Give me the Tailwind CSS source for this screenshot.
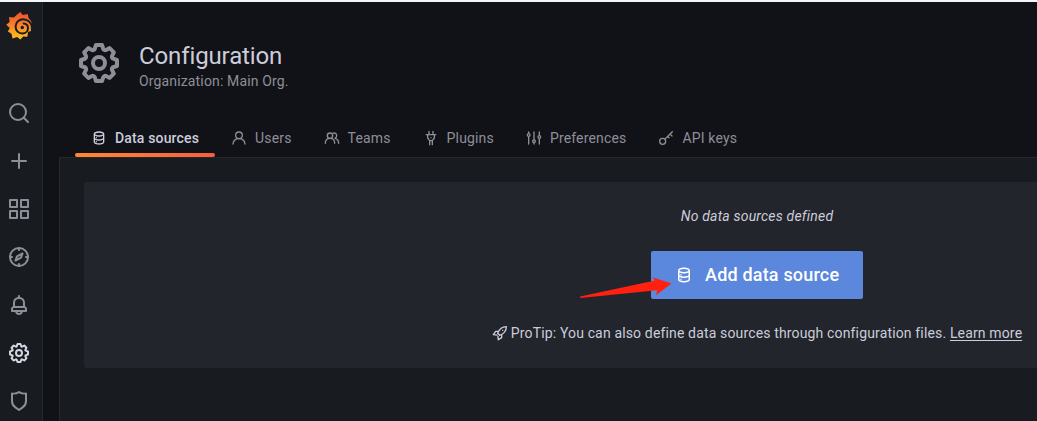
<!DOCTYPE html>
<html lang="en">
<head>
<meta charset="utf-8">
<title>Configuration: Data sources</title>
<script src="https://cdn.jsdelivr.net/npm/@tailwindcss/browser@4"></script>
</head>
<body class="h-[421px] w-[1037px] overflow-hidden bg-[#111217] font-['Roboto',sans-serif] text-sm text-[#ccccdc]">
<svg class="hidden">
  <symbol id="cog" viewBox="0 0 24 24"><path d="M21.32,9.55l-1.89-.63.89-1.78A1,1,0,0,0,20.13,6L18,3.87a1,1,0,0,0-1.15-.19l-1.78.89-.63-1.89A1,1,0,0,0,13.5,2h-3a1,1,0,0,0-.95.68L8.92,4.57,7.14,3.68A1,1,0,0,0,6,3.87L3.87,6a1,1,0,0,0-.19,1.15l.89,1.78-1.89.63A1,1,0,0,0,2,10.5v3a1,1,0,0,0,.68.95l1.89.63-.89,1.78A1,1,0,0,0,3.87,18L6,20.13a1,1,0,0,0,1.15.19l1.78-.89.63,1.89a1,1,0,0,0,.95.68h3a1,1,0,0,0,.95-.68l.63-1.89,1.78.89A1,1,0,0,0,18,20.13L20.13,18a1,1,0,0,0,.19-1.15l-.89-1.78,1.89-.63A1,1,0,0,0,22,13.5v-3A1,1,0,0,0,21.32,9.55ZM20,12.78l-1.2.4A2,2,0,0,0,17.64,16l.57,1.14-1.1,1.1L16,17.64a2,2,0,0,0-2.79,1.16l-.4,1.2H11.22l-.4-1.2A2,2,0,0,0,8,17.64l-1.14.57-1.1-1.1L6.36,16A2,2,0,0,0,5.2,13.18L4,12.78V11.22l1.2-.4A2,2,0,0,0,6.36,8L5.79,6.89l1.1-1.1L8,6.36A2,2,0,0,0,10.82,5.2l.4-1.2h1.56l.4,1.2A2,2,0,0,0,16,6.36l1.14-.57,1.1,1.1L17.64,8a2,2,0,0,0,1.16,2.79l1.2.4ZM12,8a4,4,0,1,0,4,4A4,4,0,0,0,12,8Zm0,6a2,2,0,1,1,2-2A2,2,0,0,1,12,14Z"/></symbol>
  <symbol id="database" viewBox="0 0 24 24"><path d="M8,16.5a1,1,0,1,0,1,1A1,1,0,0,0,8,16.5ZM12,2C8,2,4,3.37,4,6V18c0,2.63,4,4,8,4s8-1.37,8-4V6C20,3.37,16,2,12,2Zm6,16c0,.71-2.28,2-6,2s-6-1.29-6-2V14.73A13.16,13.16,0,0,0,12,16a13.16,13.16,0,0,0,6-1.27Zm0-6c0,.71-2.28,2-6,2s-6-1.29-6-2V8.73A13.16,13.16,0,0,0,12,10a13.16,13.16,0,0,0,6-1.27ZM12,8C8.28,8,6,6.71,6,6s2.28-2,6-2,6,1.29,6,2S15.72,8,12,8ZM8,10.5a1,1,0,1,0,1,1A1,1,0,0,0,8,10.5Z"/></symbol>
</svg>
<div class="flex h-full flex-col">
  <div class="h-[2px] shrink-0 bg-[#f5f6f8]"></div>
  <div class="flex min-h-0 flex-1">
    <nav class="flex w-[43px] shrink-0 flex-col border-r border-[#25272c] bg-[#181b1f] pt-[9px] pl-[5px] text-[#8e8e99]">
      <svg class="h-[30px] w-[28px] shrink-0" viewBox="5 11 28 30">
        <defs><linearGradient id="flame" x1="0" y1="1" x2="0" y2="0"><stop offset="0" stop-color="#fcc41a"/><stop offset=".45" stop-color="#f9892a"/><stop offset="1" stop-color="#ee4f2c"/></linearGradient></defs>
        <path fill="url(#flame)" d="M16.8 14.8L20.3 12l2.5 3.1 4.9-1 .9 4.2c2.2 1.6 3.4 4.3 3.4 7.1l-1.2 1.4.2 4.2-3 1.1-.6 4.6-4.2-.3-2.8 3-3.3-2.5-4.5 1.5-1.1-4.6-3.7-2.3 2-3.5-3.600-3.300 3.400-2.600-.6-5 4.900.5z"/>
        <path fill="none" stroke="#181b1f" stroke-width="2" stroke-linecap="round" d="M32.500 27.500C31.200 22.500 27.500 19.200 23.300 19.200c-4.500 0-7.700 3.400-7.700 7.400 0 4.200 3.100 6.900 6.700 6.900 3.400 0 5.700-2.500 5.700-5.500 0-2.800-2-4.600-4.300-4.600"/>
        <circle cx="22.300" cy="27.500" r="1.700" fill="#181b1f"/>
      </svg>
      <div class="mt-[60px] flex flex-col gap-6 pl-[2px]">
        <svg class="size-6" viewBox="0 0 24 24" fill="none" stroke="currentColor" stroke-width="2" stroke-linecap="round"><circle cx="11" cy="11" r="8"/><path d="M16.800 16.800L21 21"/></svg>
        <svg class="size-6" viewBox="0 0 24 24" fill="none" stroke="currentColor" stroke-width="2" stroke-linecap="round"><path d="M12 5v14M5 12h14"/></svg>
        <svg class="size-6" viewBox="0 0 24 24" fill="none" stroke="currentColor" stroke-width="2" stroke-linejoin="round"><path d="M3 3h7v7H3zM14 3h7v7h-7zM3 14h7v7H3zM14 14h7v7h-7z"/></svg>
        <svg class="size-6" viewBox="0 0 24 24" fill="none" stroke="currentColor" stroke-width="2" stroke-linecap="round" stroke-linejoin="round"><circle cx="12" cy="12" r="9"/><path d="M12 3v2M12 19v2M3 12h2M19 12h2M15.500 8.500l-1.500 4.200-5.500 2.800 1.500-4.200z"/></svg>
        <svg class="size-6" viewBox="0 0 24 24" fill="currentColor"><path d="M18,13.18V10a6,6,0,0,0-5-5.91V3a1,1,0,0,0-2,0V4.09A6,6,0,0,0,6,10v3.18A3,3,0,0,0,4,16v2a1,1,0,0,0,1,1H8.14a4,4,0,0,0,7.72,0H19a1,1,0,0,0,1-1V16A3,3,0,0,0,18,13.18ZM8,10a4,4,0,0,1,8,0v3H8Zm4,10a2,2,0,0,1-1.720-1h3.440A2,2,0,0,1,12,20Zm6-3H6V16a1,1,0,0,1,1-1H17a1,1,0,0,1,1,1Z"/></svg>
        <svg class="size-6 text-[#d5d5e2]" fill="currentColor"><use href="#cog"/></svg>
        <svg class="size-6" viewBox="0 0 24 24" fill="currentColor"><path d="M19.63,3.65a1,1,0,0,0-.84-.2,8,8,0,0,1-6.22-1.27,1,1,0,0,0-1.14,0A8,8,0,0,1,5.21,3.45a1,1,0,0,0-.84.2A1,1,0,0,0,4,4.43v7.45a9,9,0,0,0,3.77,7.33l3.65,2.6a1,1,0,0,0,1.16,0l3.65-2.6A9,9,0,0,0,20,11.88V4.43A1,1,0,0,0,19.63,3.65ZM18,11.88a7,7,0,0,1-2.93,5.7L12,19.77,8.93,17.58A7,7,0,0,1,6,11.88V5.58a10,10,0,0,0,6-1.39,10,10,0,0,0,6,1.39Z"/></svg>
      </div>
    </nav>
    <main class="flex min-w-0 flex-1 flex-col pl-4">
      <header class="flex h-[117px] shrink-0 gap-4 pt-[37px] pl-4 text-[#8e8e99]">
        <svg class="size-12" fill="currentColor"><use href="#cog"/></svg>
        <div class="pt-[2px]">
          <h1 class="text-2xl leading-[30px] tracking-[-0.12px] text-[#ccccdc]">Configuration</h1>
          <div class="leading-5 tracking-[0.15px]">Organization: Main Org.</div>
        </div>
      </header>
      <div class="flex h-[38px] shrink-0 pl-4 tracking-[0.16px] whitespace-nowrap text-[#8e8e99]">
        <div class="relative flex items-center gap-2 px-4 font-medium text-[#ccccdc]">
          <svg class="size-4" fill="currentColor"><use href="#database"/></svg>Data sources
          <div class="absolute inset-x-0 bottom-0 h-1 rounded-sm bg-linear-to-r from-[#ff8833] to-[#f55f3e]"></div>
        </div>
        <div class="flex items-center gap-2 px-4">
          <svg class="size-4" viewBox="0 0 24 24" fill="none" stroke="currentColor" stroke-width="2" stroke-linecap="round"><circle cx="12" cy="8" r="5"/><path d="M3 21c.5-4.500 4-8 9-8s8.500 3.500 9 8"/></svg>Users
        </div>
        <div class="flex items-center gap-2 px-4">
          <svg class="size-4" viewBox="0 0 24 24" fill="none" stroke="currentColor" stroke-width="2" stroke-linecap="round"><circle cx="9" cy="8.500" r="4"/><path d="M2 20c0-4.500 3-7.500 7-7.500s7 3 7 7.500M14 4.500c3-.4 5 1.500 5 4 0 2-1.200 3.500-3 4 3.500.7 6 3.500 6 7.500"/></svg>Teams
        </div>
        <div class="flex items-center gap-2 px-4">
          <svg class="size-4" viewBox="0 0 24 24" fill="none" stroke="currentColor" stroke-width="2" stroke-linecap="round" stroke-linejoin="round"><path d="M9 2v5M15 2v5M5 7h14M7 7v5l3 4h4l3-4V7M10 16v6M14 16v6"/><path d="M12 11.500v.1"/></svg>Plugins
        </div>
        <div class="flex items-center gap-2 px-4">
          <svg class="size-4" viewBox="0 0 24 24" fill="none" stroke="currentColor" stroke-width="2" stroke-linecap="round"><path d="M4 3v2M4 10v11M12 3v11M12 20v1M20 3v5M20 13v8"/><circle cx="4" cy="7.500" r="2"/><circle cx="12" cy="17" r="2"/><circle cx="20" cy="10.500" r="2"/></svg>Preferences
        </div>
        <div class="flex items-center gap-2 px-4">
          <svg class="size-4" viewBox="0 0 24 24" fill="none" stroke="currentColor" stroke-width="2" stroke-linecap="round"><circle cx="7" cy="17" r="4.500"/><path d="M10.300 13.700L21.500 2.500M18 6l3 3M14.500 9.500l2 2"/></svg>API keys
        </div>
      </div>
      <section class="min-h-0 flex-1 overflow-hidden border-t border-l border-[#25272c] bg-[#181b1f] pt-6 pl-6">
        <div class="flex h-[186px] w-[1346px] flex-col items-center rounded-[3px] bg-[#22252b] pt-6">
          <div class="leading-[20px] tracking-[0.2px] italic">No data sources defined</div>
          <div class="relative mt-[25px]">
            <button class="flex h-12 w-[212px] items-center gap-3 rounded-[2px] bg-[#5b87dd] pl-6 text-lg font-medium tracking-[0.19px] whitespace-nowrap text-white"><svg class="size-[18px]" fill="currentColor"><use href="#database"/></svg>Add data source</button>
            <svg class="absolute top-[24px] left-[-72px] h-6 w-24" viewBox="579 275 96 24"><path fill="#ff2010" d="M580 296.600L655 280.500 652.500 277.200 671.500 283.500 656 295.200 657.300 290.200 580.200 298z"/></svg>
          </div>
          <div class="mt-6 flex items-center leading-5 tracking-[0.15px] whitespace-nowrap">
            <svg class="mr-[3px] size-4" viewBox="0 0 24 24" fill="none" stroke="currentColor" stroke-width="2" stroke-linecap="round" stroke-linejoin="round"><path d="M8.500 12.500C11 6 15 2.500 21.500 2.500c0 6.500-3.500 10.500-10 13zM9 9.500H5.500l-3.500 5 5.500.8M14.500 15v4l-5 3.200-.6-5.200"/><path d="M16 8v.1"/></svg>
            <span>ProTip: You can also define data sources through configuration files. <a class="underline underline-offset-2">Learn more</a></span>
          </div>
        </div>
      </section>
    </main>
  </div>
</div>
</body>
</html>
